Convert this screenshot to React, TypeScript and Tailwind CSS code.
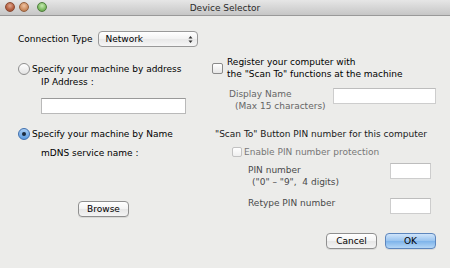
import React from "react";

const font = { fontFamily: '"DejaVu Sans", sans-serif' };

function Radio({ checked }: { checked?: boolean }) {
  return checked ? (
    <div className="w-[12px] h-[12px] rounded-full border border-[#3f6fae] bg-[linear-gradient(#a9cdf3,#5b9be0)] flex items-center justify-center shrink-0">
      <div className="w-[4px] h-[4px] rounded-full bg-[#1b2a3d]" />
    </div>
  ) : (
    <div className="w-[12px] h-[12px] rounded-full border border-[#8e8e8e] bg-[linear-gradient(#ffffff,#e3e3e3)] shrink-0" />
  );
}

function Check({ disabled }: { disabled?: boolean }) {
  return (
    <div
      className={
        disabled
          ? "w-[10px] h-[10px] rounded-[2px] border border-[#c2c2c2] bg-[linear-gradient(#ffffff,#efefef)] shrink-0"
          : "w-[11px] h-[11px] rounded-[2px] border border-[#8a8a8a] bg-[linear-gradient(#ffffff,#e6e6e6)] shrink-0"
      }
    />
  );
}

function Btn({ children, primary, w }: { children: React.ReactNode; primary?: boolean; w: string }) {
  return (
    <div
      className={
        (primary
          ? "border-[#5d86bd] bg-[linear-gradient(#cfe4fa,#98c3ef_50%,#7db3ea_51%,#b4d6f6)] "
          : "border-[#8f8f8f] bg-[linear-gradient(#ffffff,#f3f3f3_50%,#e6e6e6_51%,#f4f4f4)] ") +
        w +
        " h-[16px] rounded-[4px] border flex items-center justify-center text-[9px] leading-[12px] text-black shadow-[0_1px_0_rgba(0,0,0,0.08)]"
      }
    >
      {children}
    </div>
  );
}

export default function App() {
  return (
    <div className="w-[450px] h-[268px] bg-[#ececea] overflow-hidden text-black" style={font}>
      {/* Title bar */}
      <div className="relative h-[16px] bg-[linear-gradient(#e6e6e6,#c6c6c6)] border-b border-[#999] flex items-center justify-center">
        <div className="absolute left-[5px] top-[2px] flex items-center gap-[4px]">
          <div className="w-[10px] h-[10px] rounded-full border border-[#8a4a33] bg-[radial-gradient(circle_at_50%_35%,#e0a890,#b45f40_60%,#8f4a30)]" />
          <div className="w-[10px] h-[10px] rounded-full border border-[#94603f] bg-[radial-gradient(circle_at_50%_35%,#efc4a3,#cc8d60_60%,#a86d45)]" />
          <div className="ml-[4px] w-[10px] h-[10px] rounded-full border border-[#4f7e3d] bg-[radial-gradient(circle_at_50%_35%,#c6eab0,#7dbb62_60%,#5a9444)]" />
        </div>
        <span className="text-[9px] leading-[12px] text-[#2a2a2a]">Device Selector</span>
      </div>

      {/* Connection type */}
      <div className="flex items-center mt-[15px] pl-[18px] h-[16px]">
        <span className="text-[9px] leading-[12px]">Connection Type</span>
        <div className="ml-[6px] w-[100px] h-[16px] rounded-[4px] border border-[#999] bg-[linear-gradient(#ffffff,#f2f2f2_50%,#e8e8e8_51%,#f6f6f6)] flex items-center pl-[6px] pr-[4px]">
          <span className="text-[9px] leading-[12px]">Network</span>
          <svg className="ml-auto" width="5" height="9" viewBox="0 0 5 9">
            <path d="M0.5 3.5 L2.5 1 L4.5 3.5 Z" fill="#333" />
            <path d="M0.5 5.5 L2.5 8 L4.5 5.5 Z" fill="#333" />
          </svg>
        </div>
      </div>

      {/* Columns */}
      <div className="flex mt-[9px] pl-[18px] text-[9px] leading-[12px]">
        {/* Left */}
        <div className="w-[194px] flex flex-col pt-[7px]">
          <div className="flex items-center h-[12px]">
            <Radio />
            <span className="ml-[2px]">Specify your machine by address</span>
          </div>
          <div className="ml-[23px] mt-[1px]">IP Address :</div>
          <div className="ml-[23px] mt-[10px] w-[145px] h-[16px] bg-white border border-[#b9b9b9] border-t-[#999]" />
          <div className="flex items-center h-[12px] mt-[14px]">
            <Radio checked />
            <span className="ml-[2px]">Specify your machine by Name</span>
          </div>
          <div className="ml-[23px] mt-[7px]">mDNS service name :</div>
          <div className="ml-[60px] mt-[42px]">
            <Btn w="w-[51px]">Browse</Btn>
          </div>
        </div>

        {/* Right */}
        <div className="w-[224px] flex flex-col">
          <div className="flex items-center">
            <Check />
            <div className="ml-[4px]">
              <div>Register your computer with</div>
              <div>the "Scan To" functions at the machine</div>
            </div>
          </div>
          <div className="flex items-start mt-[8px]">
            <div className="ml-[17px] text-[#666]">
              <div>Display Name</div>
              <div className="ml-[6px]">(Max 15 characters)</div>
            </div>
            <div className="ml-auto w-[103px] h-[16px] bg-white border border-[#cdcdcd] border-t-[#bdbdbd]" />
          </div>
          <div className="ml-[3px] mt-[16px] text-[#1a1a1a]">"Scan To" Button PIN number for this computer</div>
          <div className="flex items-center mt-[6px] ml-[20px] text-[#777]">
            <Check disabled />
            <span className="ml-[2px]">Enable PIN number protection</span>
          </div>
          <div className="flex items-start mt-[5px]">
            <div className="ml-[36px] mt-[1px] text-[#4a4a4a]">
              <div>PIN number</div>
              <div className="ml-[4px]">("0" – "9",&nbsp; 4 digits)</div>
            </div>
            <div className="ml-auto mr-[5px] w-[41px] h-[16px] bg-white border border-[#cdcdcd] border-t-[#bdbdbd]" />
          </div>
          <div className="flex items-start mt-[9px]">
            <div className="ml-[36px] text-[#4a4a4a]">Retype PIN number</div>
            <div className="ml-auto mr-[5px] mt-[1px] w-[41px] h-[16px] bg-white border border-[#cdcdcd] border-t-[#bdbdbd]" />
          </div>
          <div className="flex justify-end gap-[8px] mt-[19px]">
            <Btn w="w-[51px]">Cancel</Btn>
            <Btn w="w-[51px]" primary>
              OK
            </Btn>
          </div>
        </div>
      </div>
    </div>
  );
}
